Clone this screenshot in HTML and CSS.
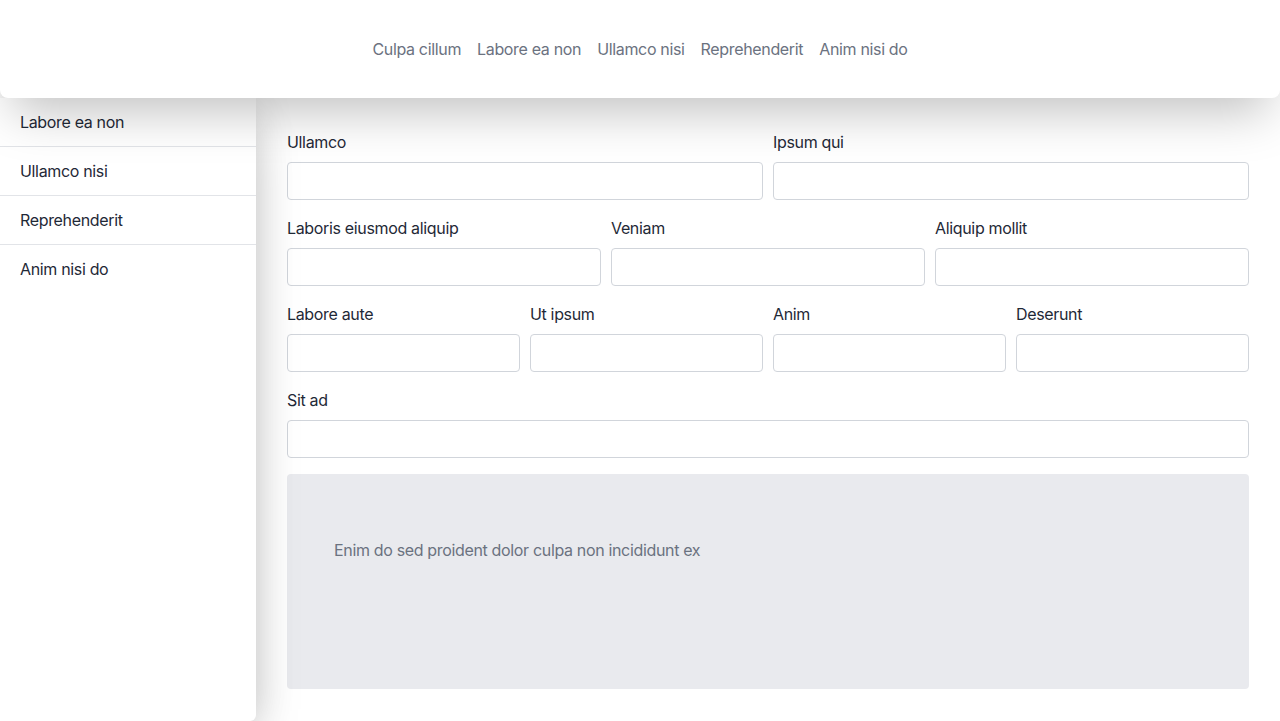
FILE: index.html
```html
<!DOCTYPE html>
<html lang="en">
<head>
<meta charset="utf-8">
<title>Form</title>
<link rel="stylesheet" href="styles.css">
</head>
<body>
<header class="topbar">
  <nav class="topnav">
    <a class="topnav-link">Culpa cillum</a>
    <a class="topnav-link">Labore ea non</a>
    <a class="topnav-link">Ullamco nisi</a>
    <a class="topnav-link">Reprehenderit</a>
    <a class="topnav-link">Anim nisi do</a>
  </nav>
</header>
<div class="layout">
  <aside class="sidebar">
    <a class="side-item">Labore ea non</a>
    <a class="side-item">Ullamco nisi</a>
    <a class="side-item">Reprehenderit</a>
    <a class="side-item">Anim nisi do</a>
  </aside>
  <main class="main">
    <div class="row cols-2">
      <label class="field"><span class="label">Ullamco</span><input class="input" type="text"></label>
      <label class="field"><span class="label">Ipsum qui</span><input class="input" type="text"></label>
    </div>
    <div class="row cols-3">
      <label class="field"><span class="label">Laboris eiusmod aliquip</span><input class="input" type="text"></label>
      <label class="field"><span class="label">Veniam</span><input class="input" type="text"></label>
      <label class="field"><span class="label">Aliquip mollit</span><input class="input" type="text"></label>
    </div>
    <div class="row cols-4">
      <label class="field"><span class="label">Labore aute</span><input class="input" type="text"></label>
      <label class="field"><span class="label">Ut ipsum</span><input class="input" type="text"></label>
      <label class="field"><span class="label">Anim</span><input class="input" type="text"></label>
      <label class="field"><span class="label">Deserunt</span><input class="input" type="text"></label>
    </div>
    <div class="row cols-1">
      <label class="field"><span class="label">Sit ad</span><input class="input" type="text"></label>
    </div>
    <div class="panel">
      <p class="panel-text">Enim do sed proident dolor culpa non incididunt ex</p>
    </div>
  </main>
</div>
</body>
</html>
```

FILE: styles.css
```css
* { box-sizing: border-box; }
html, body { margin: 0; padding: 0; height: 100%; }
body {
  font-family: Inter, "Liberation Sans", sans-serif;
  font-size: 16px;
  line-height: 24px;
  letter-spacing: -0.34px;
  color: #1f2937;
  background: #fff;
  display: flex;
  flex-direction: column;
  overflow: hidden;
}
.topbar {
  position: relative;
  z-index: 2;
  height: 98px;
  flex: none;
  background: #fff;
  border-radius: 0 0 8px 8px;
  box-shadow: 0 25px 50px -12px rgba(0,0,0,0.25);
  display: flex;
  align-items: center;
  justify-content: center;
}
.topnav { display: flex; gap: 16px; }
.topnav-link { color: #6b7280; text-decoration: none; }
.layout { flex: 1; display: flex; min-height: 0; min-width: 0; }
.sidebar {
  position: relative;
  z-index: 1;
  width: 256px;
  flex: none;
  background: #fff;
  border-radius: 0 0 6px 0;
  box-shadow: 0 25px 50px -12px rgba(0,0,0,0.25), 0 0 40px rgba(0,0,0,0.12);
  display: flex;
  flex-direction: column;
}
.side-item {
  height: 49px;
  padding: 12px 20px;
  border-bottom: 1px solid #e2e4e8;
  color: #1f2937;
}
.side-item:last-child { border-bottom: none; }
.main {
  flex: 1;
  min-width: 0;
  padding: 32px 31px;
  display: flex;
  flex-direction: column;
  gap: 16px;
}
.row { display: grid; column-gap: 10px; }
.cols-1 { grid-template-columns: minmax(0, 1fr); }
.cols-2 { grid-template-columns: repeat(2, minmax(0, 1fr)); }
.cols-3 { grid-template-columns: repeat(3, minmax(0, 1fr)); }
.cols-4 { grid-template-columns: repeat(4, minmax(0, 1fr)); }
.field { display: flex; flex-direction: column; gap: 8px; min-width: 0; }
.label { color: #1f2937; }
.input {
  width: 100%;
  min-width: 0;
  height: 38px;
  border: 1px solid #d1d5db;
  border-radius: 4px;
  background: #fff;
  font: inherit;
  padding: 0 12px;
  outline: none;
}
.panel {
  flex: 1;
  background: #e9eaee;
  border-radius: 4px;
  padding: 64px 47px;
}
.panel-text { margin: 0; color: #6b7280; }
```
